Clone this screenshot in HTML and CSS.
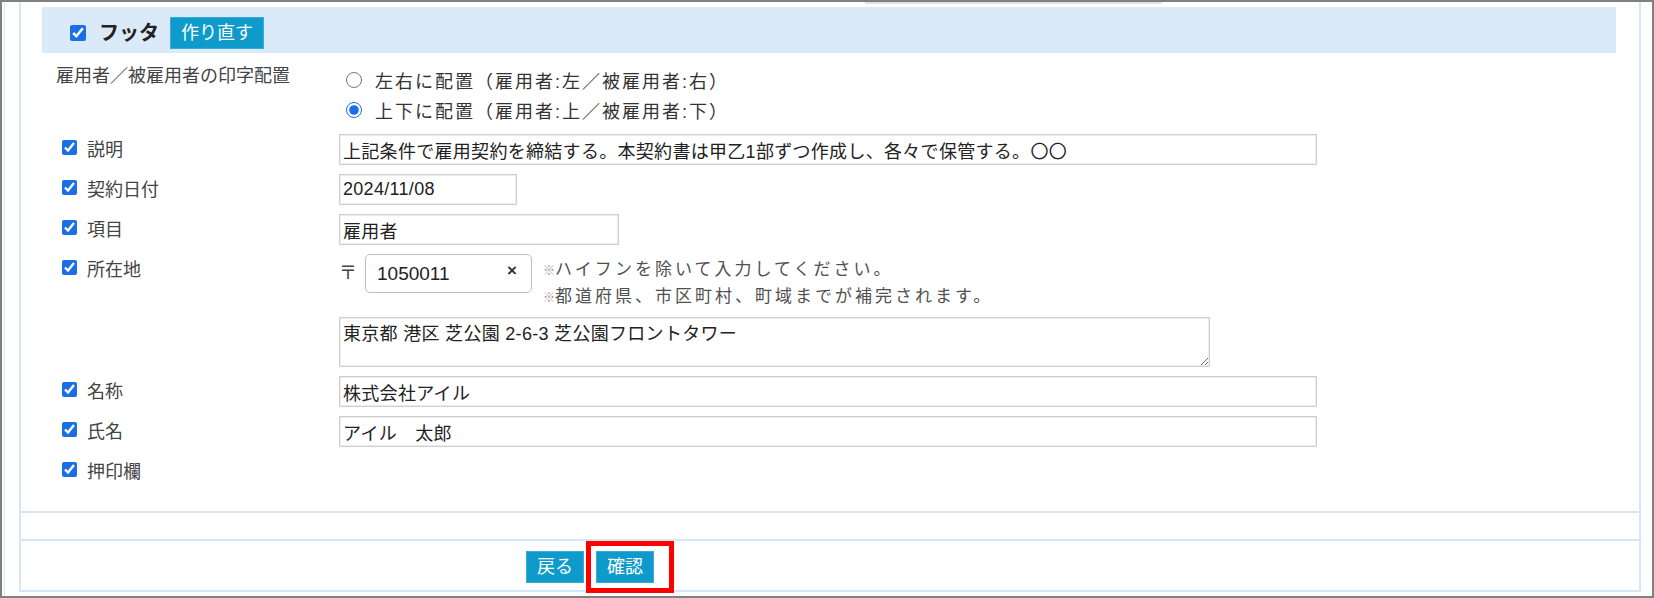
FILE: index.html
```html
<!DOCTYPE html>
<html lang="ja">

<head>
    <meta charset="UTF-8">
    <title>フッタ設定</title>
    <link rel="stylesheet" href="styles.css">
</head>

<body>
    <div class="frame">
        <div class="page">
            <div class="panel">
                <div class="top-strip"></div>
                <div class="section-head">
                    <input type="checkbox" class="head-check" checked>
                    <span class="section-title">フッタ</span>
                    <button class="btn">作り直す</button>
                </div>

                <div class="form">
                    <div class="row row-layout">
                        <div class="label-plain">雇用者／被雇用者の印字配置</div>
                        <div class="radios">
                            <label class="radio"><input type="radio" name="layout">左右に配置（雇用者:左／被雇用者:右）</label>
                            <label class="radio"><input type="radio" name="layout" checked>上下に配置（雇用者:上／被雇用者:下）</label>
                        </div>
                    </div>

                    <div class="row">
                        <label class="label-check"><input type="checkbox" checked>説明</label>
                        <div><input class="text wide" type="text" value="上記条件で雇用契約を締結する。本契約書は甲乙1部ずつ作成し、各々で保管する。〇〇"></div>
                    </div>

                    <div class="row">
                        <label class="label-check"><input type="checkbox" checked>契約日付</label>
                        <div><input class="text date" type="text" value="2024/11/08"></div>
                    </div>

                    <div class="row">
                        <label class="label-check"><input type="checkbox" checked>項目</label>
                        <div><input class="text item" type="text" value="雇用者"></div>
                    </div>

                    <div class="row">
                        <label class="label-check"><input type="checkbox" checked>所在地</label>
                        <div>
                            <div class="zip-line">
                                <span class="zip-mark">〒</span>
                                <div class="zip-box">
                                    <input type="text" value="1050011">
                                    <span class="zip-clear">×</span>
                                </div>
                                <div class="zip-hints">
                                    <div class="hint"><span class="kome">※</span>ハイフンを除いて入力してください。</div>
                                    <div class="hint"><span class="kome">※</span>都道府県、市区町村、町域までが補完されます。</div>
                                </div>
                            </div>
                            <textarea class="text address">東京都 港区 芝公園 2-6-3 芝公園フロントタワー</textarea>
                        </div>
                    </div>

                    <div class="row">
                        <label class="label-check"><input type="checkbox" checked>名称</label>
                        <div><input class="text wide" type="text" value="株式会社アイル"></div>
                    </div>

                    <div class="row">
                        <label class="label-check"><input type="checkbox" checked>氏名</label>
                        <div><input class="text wide" type="text" value="アイル　太郎"></div>
                    </div>

                    <div class="row">
                        <label class="label-check"><input type="checkbox" checked>押印欄</label>
                        <div></div>
                    </div>
                </div>
            </div>

            <div class="blank-row"></div>

            <div class="actions">
                <button class="btn">戻る</button>
                <button class="btn">確認</button>
                <div class="highlight"></div>
            </div>
        </div>
    </div>
</body>

</html>
```

FILE: styles.css
```css
:root {
    --teal: #0e9acb;
    --line: #d6e6f7;
    --band: #dbeaf8;
    --check: #1a6fe6;
}

* {
    box-sizing: border-box;
}

body {
    margin: 0;
    background: #fff;
    color: #333;
    font-family: "Liberation Sans", "Noto Sans CJK JP", sans-serif;
}

.frame {
    width: 1654px;
    height: 598px;
    border: 2px solid #808080;
    overflow: hidden;
}

.page {
    height: 100%;
    margin-left: 2px;
    border-left: 1px solid #dce8f5;
    padding-left: 14px;
}

.panel {
    width: 1622px;
    height: 511px;
    border: 2px solid var(--line);
    border-top: none;
    padding: 0 23px 0 21px;
}

.top-strip {
    width: 297px;
    height: 2px;
    margin: 0 0 3px 823px;
    background: #e2e2e2;
}

/* cabecera de la sección */
.section-head {
    display: flex;
    align-items: center;
    height: 46px;
    padding: 10px 0 4px 28px;
    background: var(--band);
}

.head-check {
    width: 16px;
    height: 16px;
    margin: 0 13px 0 0;
    accent-color: var(--check);
}

.section-title {
    font-size: 20px;
    font-weight: bold;
    line-height: 32px;
    color: #222;
    margin-right: 11px;
}

.btn {
    height: 32px;
    padding: 0 10px;
    border: 1px solid #3aaad6;
    border-radius: 0;
    background: var(--teal);
    color: #fff;
    font-family: inherit;
    font-size: 18px;
    line-height: 30px;
    cursor: pointer;
}

/* formulario */
.form {
    padding-left: 14px;
}

.row {
    display: grid;
    grid-template-columns: 283px 1fr;
    align-items: start;
    margin-top: 9px;
}

.row-layout {
    margin-top: 12px;
}

.label-plain {
    font-size: 18px;
    line-height: 22px;
    color: #444;
}

.radios {
    padding-left: 7px;
}

.radio {
    display: flex;
    align-items: center;
    height: 30px;
    font-size: 18px;
    letter-spacing: 2px;
    color: #333;
}

.radio input {
    width: 16px;
    height: 16px;
    margin: 0 13px 0 0;
    accent-color: var(--check);
}

.label-check {
    display: flex;
    align-items: center;
    height: 27px;
    padding-left: 6px;
    font-size: 18px;
    color: #444;
}

.label-check input {
    width: 15px;
    height: 15px;
    margin: 0 10px 0 0;
    accent-color: var(--check);
}

.text {
    display: block;
    height: 31px;
    padding: 0 3px;
    border: 1px solid #cfcfcf;
    box-shadow: inset 0 0 0 1px #ececec;
    border-radius: 0;
    font-family: inherit;
    font-size: 18px;
    letter-spacing: 0.3px;
    color: #222;
    background: #fff;
}

.text.wide {
    width: 978px;
}

.text.date {
    width: 178px;
}

.text.item {
    width: 280px;
}

.zip-line {
    display: flex;
    align-items: flex-start;
}

.zip-mark {
    width: 26px;
    font-size: 18px;
    line-height: 39px;
    color: #444;
}

.zip-box {
    display: flex;
    align-items: center;
    width: 167px;
    height: 39px;
    padding: 0 14px 0 11px;
    border: 1px solid #bdbdbd;
    border-radius: 5px;
}

.zip-box input {
    flex: 1;
    min-width: 0;
    padding: 0;
    border: none;
    outline: none;
    font-family: inherit;
    font-size: 19px;
    color: #222;
}

.zip-clear {
    font-size: 17px;
    font-weight: bold;
    color: #333;
    margin-bottom: 6px;
}

.zip-hints {
    margin: 2px 0 0 11px;
    font-size: 17px;
    letter-spacing: 3px;
    color: #505050;
}

.hint {
    height: 27px;
    line-height: 27px;
    white-space: nowrap;
}

.kome {
    font-size: 12px;
    letter-spacing: 0;
    color: #999;
}

.text.address {
    width: 871px;
    height: 50px;
    margin-top: 7px;
    padding: 3px;
    line-height: 26px;
}

/* filas inferiores */
.blank-row {
    width: 1622px;
    height: 28px;
    border: 2px solid var(--line);
    border-top: none;
}

.actions {
    position: relative;
    display: flex;
    align-items: flex-start;
    gap: 12px;
    width: 1622px;
    height: 51px;
    padding: 10px 0 0 505px;
    border: 2px solid var(--line);
    border-top: none;
}

/* marco rojo de anotación */
.highlight {
    position: absolute;
    left: 565px;
    top: 0;
    width: 88px;
    height: 52px;
    border: 5px solid #f00;
}
```
